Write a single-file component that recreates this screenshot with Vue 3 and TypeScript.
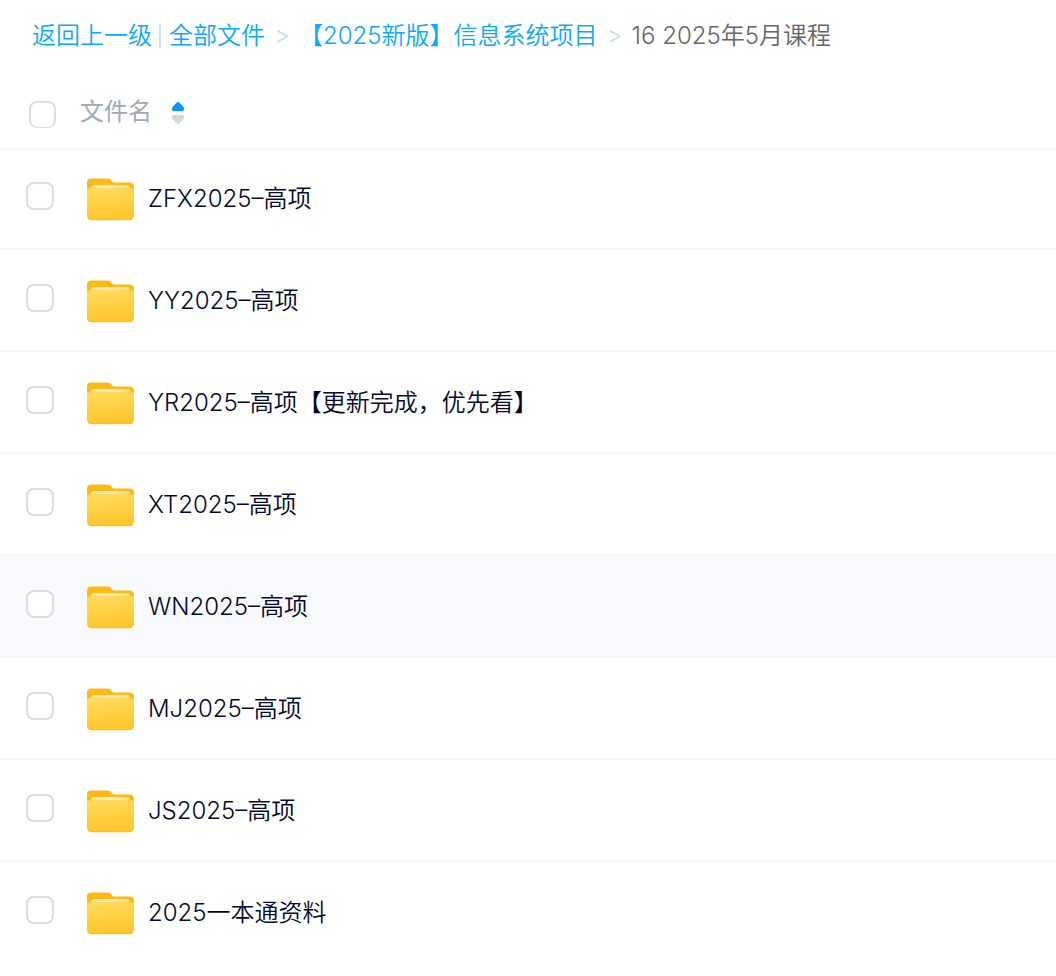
<script setup lang="ts">
import { computed, ref } from 'vue'

interface Folder {
  name: string
  checked: boolean
}

const folders = ref<Folder[]>(
  [
    'ZFX2025–高项',
    'YY2025–高项',
    'YR2025–高项【更新完成，优先看】',
    'XT2025–高项',
    'WN2025–高项',
    'MJ2025–高项',
    'JS2025–高项',
    '2025一本通资料',
  ].map((name) => ({ name, checked: false })),
)

const active = ref('WN2025–高项')

const allChecked = computed({
  get: () => folders.value.every((f) => f.checked),
  set: (value: boolean) => folders.value.forEach((f) => (f.checked = value)),
})
</script>

<template>
  <main class="files">
    <nav class="crumbs" aria-label="路径">
      <a class="back" href="#">返回上一级</a>
      <a href="#">全部文件</a>
      <span class="sep">&gt;</span>
      <a href="#">【2025新版】信息系统项目</a>
      <span class="sep">&gt;</span>
      <span class="current">16 2025年5月课程</span>
    </nav>

    <table class="list">
      <thead>
        <tr>
          <th class="pick"><input v-model="allChecked" class="box box-all" type="checkbox" aria-label="全选" /></th>
          <th class="title" scope="col">
            <button class="sort" type="button">
              文件名
              <svg class="arrows" width="14" height="24" viewBox="0 0 14 24" aria-hidden="true">
                <path d="M5.4 2.8Q7 1.4 8.6 2.8L12.6 7.2Q13.6 8.6 12.8 10Q12.4 11 11.5 11H2.5Q1.6 11 1.2 10Q.4 8.6 1.4 7.2Z" fill="#0a95ff" />
                <path d="M5.4 23.2Q7 24.6 8.6 23.2L12.6 18.8Q13.6 17.4 12.8 16Q12.4 15 11.5 15H2.5Q1.6 15 1.2 16Q.4 17.4 1.4 18.8Z" fill="#d4d7de" />
              </svg>
            </button>
          </th>
        </tr>
      </thead>
      <tbody>
        <tr v-for="(folder, i) in folders" :key="folder.name" :class="{ active: folder.name === active }">
          <td class="pick">
            <input :id="`folder-${i}`" v-model="folder.checked" class="box" type="checkbox" />
          </td>
          <td>
            <label class="name" :for="`folder-${i}`">
              <svg class="icon" width="48" height="44" viewBox="0 -1 48 44" aria-hidden="true">
                <defs>
                  <linearGradient :id="`front-${i}`" x1="0" y1="0" x2="0.15" y2="1">
                    <stop offset="0" stop-color="#ffdb5c" />
                    <stop offset="1" stop-color="#ffc72e" />
                  </linearGradient>
                  <linearGradient :id="`sheet-${i}`" x1="0" y1="0" x2="1" y2="0">
                    <stop offset="0" stop-color="#ffe49c" />
                    <stop offset="0.5" stop-color="#ffedc0" />
                    <stop offset="1" stop-color="#ffdc80" />
                  </linearGradient>
                </defs>
                <path d="M0 4.5Q0 .5 4.5 .5H20.5Q22.8 .5 24 2L25.2 3.4Q26 4.4 27.5 4.4H42.5Q47 4.4 47 9V20H0Z" fill="#ffb917" />
                <path d="M4 12V10Q4 7 7 7H40Q43 7 43 10V12Z" :fill="`url(#sheet-${i})`" />
                <path d="M0 10.4H47V37Q47 42.3 42 42.3H5Q0 42.3 0 37Z" fill="#ffbd1f" />
                <path d="M0 10.4H47V36Q47 41 42 41H5Q0 41 0 36Z" :fill="`url(#front-${i})`" />
              </svg>
              <span>{{ folder.name }}</span>
            </label>
          </td>
        </tr>
      </tbody>
    </table>
  </main>
</template>

<style>
body {
  margin: 0;
  background: #fff;
}
</style>

<style scoped>
.files {
  font-family: Inter, "Noto Sans CJK SC", sans-serif;
  font-size: 24px;
  font-weight: 350;
  line-height: 32px;
  color: #03082e;
}

.crumbs {
  display: flex;
  align-items: center;
  height: 72px;
  padding-left: 32px;
  white-space: nowrap;
}

.crumbs a {
  color: #09aaff;
  text-decoration: none;
}

.crumbs .back {
  display: flex;
  align-items: center;
}

.crumbs .back::after {
  content: "";
  width: 2px;
  height: 24px;
  margin: 0 8px 0 7px;
  background: #d0e2fb;
}

.sep {
  width: 34px;
  text-align: center;
  color: #c4d8f6;
}

.current {
  color: #666;
}

.list {
  width: 100%;
  border-collapse: separate;
  border-spacing: 0;
  table-layout: fixed;
}

th,
td {
  padding: 0;
  text-align: left;
  font-weight: inherit;
}

th {
  height: 76px;
  vertical-align: top;
}

td {
  height: 100px;
  border-top: 2px solid #f5f6f9;
  vertical-align: bottom;
}

tbody tr:first-child td {
  height: 98px;
}

.pick {
  width: 80px;
}

.box {
  appearance: none;
  display: block;
  box-sizing: border-box;
  width: 28px;
  height: 28px;
  margin: 0 0 38px 26px;
  border: 2px solid #dcdcdc;
  border-radius: 8px;
  background: #fff;
}

.box:checked {
  border-color: #09aaff;
  background: #09aaff;
}

.box-all {
  width: 27px;
  height: 27px;
  margin: 29px 0 0 29px;
  border-bottom-width: 1px;
}

.sort {
  display: flex;
  align-items: center;
  gap: 19px;
  margin-top: 24px;
  padding: 0;
  border: 0;
  background: none;
  font: inherit;
  font-weight: 400;
  color: #a1a9bb;
}

.name {
  display: flex;
  align-items: center;
  gap: 13px;
  height: 44px;
  margin: 0 0 27px 7px;
}

.active td {
  background: #f7f9fd;
  border-color: #f1f5fb;
}
</style>
